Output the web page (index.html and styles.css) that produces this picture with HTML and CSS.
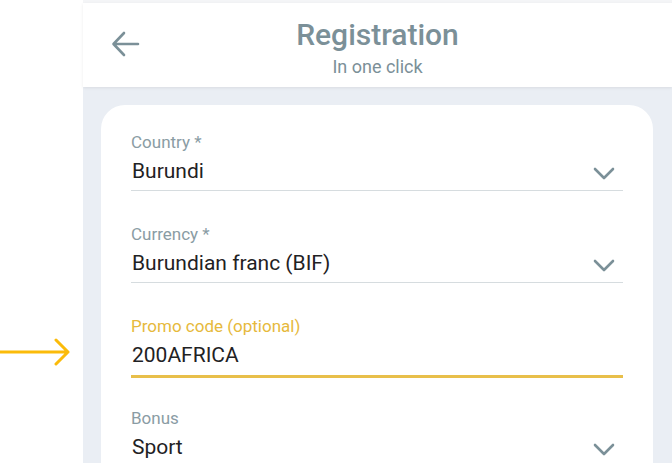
FILE: index.html
```html
<!DOCTYPE html>
<html>
<head>
<meta charset="utf-8">
<link rel="stylesheet" href="styles.css">
</head>
<body>
<div class="page">
  <aside class="side">
    <svg class="pointer" width="72" height="30" viewBox="0 0 72 30">
      <path d="M0 15 H68 M56 3 L68 15 L56 27" fill="none" stroke="#fbbb0a" stroke-width="3" stroke-linecap="round" stroke-linejoin="round"/>
    </svg>
  </aside>
  <main class="app">
    <div class="strip"></div>
    <header class="header">
      <svg class="back" width="30" height="26" viewBox="0 0 30 26">
        <path d="M27 13 H3 M13 2 L2.5 13 L13 24" fill="none" stroke="#7b9098" stroke-width="2.6" stroke-linecap="round" stroke-linejoin="round"/>
      </svg>
      <div class="titles">
        <div class="title">Registration</div>
        <div class="subtitle">In one click</div>
      </div>
    </header>
    <section class="content">
      <div class="card">
        <div class="field">
          <div class="label">Country *</div>
          <div class="row"><span class="value">Burundi</span><svg class="chev" width="22" height="13" viewBox="0 0 22 13"><path d="M2 2 L11 11 L20 2" fill="none" stroke="#7b9098" stroke-width="2.6" stroke-linecap="round" stroke-linejoin="round"/></svg></div>
        </div>
        <div class="field">
          <div class="label">Currency *</div>
          <div class="row"><span class="value">Burundian franc (BIF)</span><svg class="chev" width="22" height="13" viewBox="0 0 22 13"><path d="M2 2 L11 11 L20 2" fill="none" stroke="#7b9098" stroke-width="2.6" stroke-linecap="round" stroke-linejoin="round"/></svg></div>
        </div>
        <div class="field active">
          <div class="label">Promo code (optional)</div>
          <div class="row"><span class="value">200AFRICA</span></div>
        </div>
        <div class="field">
          <div class="label">Bonus</div>
          <div class="row"><span class="value">Sport</span><svg class="chev" width="22" height="13" viewBox="0 0 22 13"><path d="M2 2 L11 11 L20 2" fill="none" stroke="#7b9098" stroke-width="2.6" stroke-linecap="round" stroke-linejoin="round"/></svg></div>
        </div>
      </div>
    </section>
  </main>
</div>
</body>
</html>
```
FILE: styles.css
```css
html, body {
  margin: 0;
  padding: 0;
  background: #ffffff;
  font-family: Roboto, "Liberation Sans", sans-serif;
}
.page {
  display: flex;
  width: 672px;
  height: 463px;
  overflow: hidden;
}
.side {
  width: 83px;
  flex: none;
  background: #ffffff;
}
.pointer {
  display: block;
  margin-top: 337px;
  margin-left: 0;
}
.app {
  flex: 1;
  background: #eaeef4;
  display: flex;
  flex-direction: column;
  min-height: 0;
}
.strip {
  flex: none;
  height: 3px;
  background: #f4f5f7;
}
.header {
  flex: none;
  height: 84px;
  background: #ffffff;
  box-shadow: 0 1px 3px rgba(0,0,0,0.08);
  display: flex;
  align-items: center;
  position: relative;
}
.back {
  display: block;
  margin-left: 28px;
  margin-top: -2px;
}
.titles {
  flex: 1;
  text-align: center;
  margin-left: -58px;
  margin-top: 4px;
}
.title {
  font-size: 30px;
  font-weight: 500;
  color: #7b9098;
  line-height: 34px;
}
.subtitle {
  font-size: 18px;
  color: #7b9098;
  line-height: 20px;
  margin-top: 5px;
}
.content {
  flex: none;
  padding: 18px 19px 0 18px;
}
.card {
  background: #ffffff;
  border-radius: 24px;
  padding: 27px 30px 0 30px;
  height: 400px;
}
.field {
  margin-bottom: 33px;
}
.label {
  font-size: 17px;
  line-height: 20px;
  color: #8a9ca4;
}
.row {
  display: flex;
  align-items: center;
  justify-content: space-between;
  border-bottom: 1.5px solid #d6dcdf;
  padding: 6px 0 6px 1px;
}
.value {
  font-size: 21px;
  line-height: 26px;
  color: #1f2224;
}
.chev {
  display: block;
  margin-right: 8px;
  margin-top: 4px;
}
.field.active {
  margin-bottom: 30px;
}
.active .label {
  color: #e6b93c;
}
.active .row {
  border-bottom: 3px solid #e8bf4a;
  padding-bottom: 7px;
}
```
